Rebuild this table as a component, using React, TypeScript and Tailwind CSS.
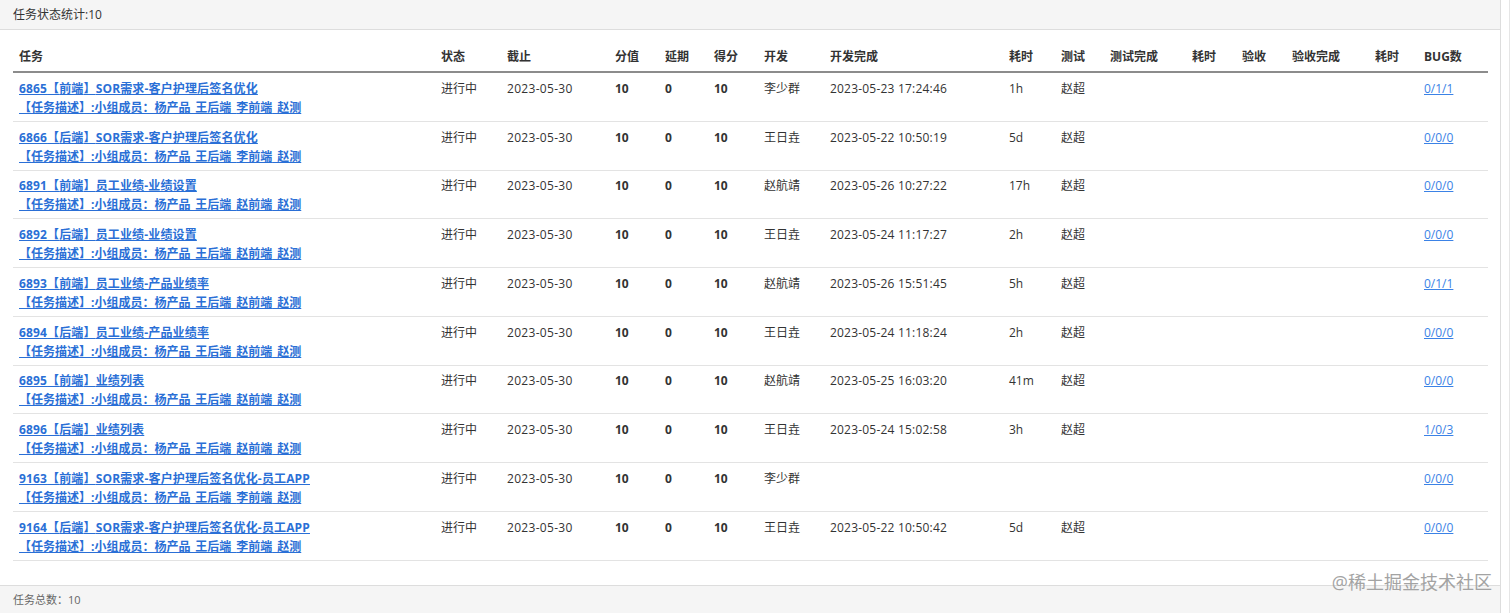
const rows = [
  { id: '6865', side: '前端', name: 'SOR需求-客户护理后签名优化', fe: '李前端', dev: '李少群', done: '2023-05-23 17:24:46', cost: '1h', tester: '赵超', bug: '0/1/1' },
  { id: '6866', side: '后端', name: 'SOR需求-客户护理后签名优化', fe: '李前端', dev: '王日垚', done: '2023-05-22 10:50:19', cost: '5d', tester: '赵超', bug: '0/0/0' },
  { id: '6891', side: '前端', name: '员工业绩-业绩设置', fe: '赵前端', dev: '赵航靖', done: '2023-05-26 10:27:22', cost: '17h', tester: '赵超', bug: '0/0/0' },
  { id: '6892', side: '后端', name: '员工业绩-业绩设置', fe: '赵前端', dev: '王日垚', done: '2023-05-24 11:17:27', cost: '2h', tester: '赵超', bug: '0/0/0' },
  { id: '6893', side: '前端', name: '员工业绩-产品业绩率', fe: '赵前端', dev: '赵航靖', done: '2023-05-26 15:51:45', cost: '5h', tester: '赵超', bug: '0/1/1' },
  { id: '6894', side: '后端', name: '员工业绩-产品业绩率', fe: '赵前端', dev: '王日垚', done: '2023-05-24 11:18:24', cost: '2h', tester: '赵超', bug: '0/0/0' },
  { id: '6895', side: '前端', name: '业绩列表', fe: '赵前端', dev: '赵航靖', done: '2023-05-25 16:03:20', cost: '41m', tester: '赵超', bug: '0/0/0' },
  { id: '6896', side: '后端', name: '业绩列表', fe: '赵前端', dev: '王日垚', done: '2023-05-24 15:02:58', cost: '3h', tester: '赵超', bug: '1/0/3' },
  { id: '9163', side: '前端', name: 'SOR需求-客户护理后签名优化-员工APP', fe: '李前端', dev: '李少群', done: '', cost: '', tester: '', bug: '0/0/0' },
  { id: '9164', side: '后端', name: 'SOR需求-客户护理后签名优化-员工APP', fe: '李前端', dev: '王日垚', done: '2023-05-22 10:50:42', cost: '5d', tester: '赵超', bug: '0/0/0' },
]

const cols = [
  { label: '任务', w: 422 },
  { label: '状态', w: 66 },
  { label: '截止', w: 108 },
  { label: '分值', w: 50 },
  { label: '延期', w: 49 },
  { label: '得分', w: 50 },
  { label: '开发', w: 66 },
  { label: '开发完成', w: 179 },
  { label: '耗时', w: 52 },
  { label: '测试', w: 49 },
  { label: '测试完成', w: 82 },
  { label: '耗时', w: 50 },
  { label: '验收', w: 50 },
  { label: '验收完成', w: 83 },
  { label: '耗时', w: 49 },
  { label: 'BUG数', w: 70 },
]

const font = { fontFamily: '"Open Sans", "Noto Sans CJK SC", sans-serif' }

const cell = 'px-[6px] pb-[4px] pt-[5.75px] leading-[19px]'

export default function App() {
  return (
    <div className="flex h-[613px] w-[1512px] overflow-hidden bg-white text-[12px] text-[#333]" style={font}>
      <div className="relative flex w-[1501px] flex-col border-r border-[#ddd]">
        <div className="h-[30px] border-b border-[#ddd] bg-[#f5f5f5] px-[13px] leading-[29px]">任务状态统计:10</div>

        <div className="flex-1 px-[13px] pt-[12px]">
          <table className="w-[1475px] table-fixed border-collapse">
            <colgroup>
              {cols.map((c, i) => (
                <col key={i} style={{ width: c.w }} />
              ))}
            </colgroup>
            <thead>
              <tr className="border-b-2 border-[#8c8c8c]">
                {cols.map((c, i) => (
                  <th key={i} className="px-[6px] py-[5px] text-left font-bold leading-[19px]">
                    {c.label}
                  </th>
                ))}
              </tr>
            </thead>
            <tbody>
              {rows.map((r) => (
                <tr key={r.id} className="border-b border-[#e3e3e3] align-top">
                  <td className={cell}>
                    <a className="block font-bold tracking-[0.15px] text-[#2a6fd6] underline">
                      {r.id}【{r.side}】{r.name}
                    </a>
                    <a className="block font-bold text-[#2a6fd6] underline">
                      【任务描述】:小组成员：杨产品_王后端_{r.fe}_赵测
                    </a>
                  </td>
                  <td className={cell}>进行中</td>
                  <td className={`${cell} tracking-[0.3px]`}>2023-05-30</td>
                  <td className={`${cell} font-bold`}>10</td>
                  <td className={`${cell} font-bold`}>0</td>
                  <td className={`${cell} font-bold`}>10</td>
                  <td className={cell}>{r.dev}</td>
                  <td className={`${cell} tracking-[0.2px]`}>{r.done}</td>
                  <td className={cell}>{r.cost}</td>
                  <td className={cell}>{r.tester}</td>
                  <td className={cell}></td>
                  <td className={cell}></td>
                  <td className={cell}></td>
                  <td className={cell}></td>
                  <td className={cell}></td>
                  <td className={cell}>
                    <a className="text-[#3b82e6] underline">{r.bug}</a>
                  </td>
                </tr>
              ))}
            </tbody>
          </table>
        </div>

        <div className="h-[28px] border-t border-[#ddd] bg-[#f5f5f5] px-[13px] text-[11px] leading-[28px] text-[#666]">
          任务总数：10
        </div>

        <div className="pointer-events-none absolute bottom-[21px] right-[8px] text-[18px] leading-[20px] text-[#a3a3a3]">
          @稀土掘金技术社区
        </div>
      </div>
      <div className="ml-[8px] flex-1 border-l border-[#e5e5e5]" />
    </div>
  )
}
